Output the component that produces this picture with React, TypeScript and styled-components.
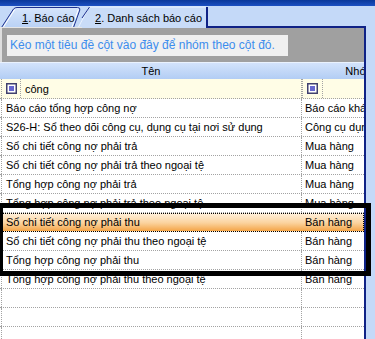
import React from "react";
import styled, { createGlobalStyle } from "styled-components";

const GlobalStyle = createGlobalStyle`
  html, body { margin: 0; padding: 0; background: #c4d9f8; }
  * { box-sizing: border-box; }
`;

const NAVY = "#0f2286";
const DOT = "#a3a3a3";

const Root = styled.div`
  position: relative;
  width: 375px;
  height: 339px;
  overflow: hidden;
  background: #c4d9f8;
  font-family: "Liberation Sans", Arial, sans-serif;
  font-size: 11px;
  color: #000;
`;

const TitleBar = styled.div`
  height: 6px;
  background: linear-gradient(#0a3799, #1c50c2);
`;

const TabStrip = styled.div`
  display: flex;
  width: 366px;
  height: 22px;
`;

const Tab = styled.div<{ $w: number; $pad: number; $front?: boolean; $overlap?: number }>`
  position: relative;
  flex: none;
  width: ${(p) => p.$w}px;
  height: 22px;
  margin-left: ${(p) => -(p.$overlap || 0)}px;
  padding-left: ${(p) => p.$pad}px;
  padding-top: 1px;
  display: flex;
  align-items: center;
  z-index: ${(p) => (p.$front ? 2 : 1)};
  white-space: nowrap;
  font-size: 11px;
`;

const TabShape = styled.svg`
  position: absolute;
  left: 0;
  top: 0;
  z-index: -1;
`;

const TabLabel = styled.span`
  position: relative;
  line-height: 14px;
`;

const Hot = styled.span`
  text-decoration: underline;
`;

const TabFiller = styled.div`
  flex: 1;
  border-bottom: 2px solid ${NAVY};
`;

const Panel = styled.div`
  width: 366px;
  height: 311px;
  border-right: 2px solid ${NAVY};
  background: #fff;
  overflow: hidden;
`;

const GroupPanel = styled.div`
  height: 34px;
  background: #a0a0a0;
  border-left: 2px solid #dedede;
  padding: 7px 0 0 5px;
`;

const GroupHint = styled.div`
  width: 281px;
  height: 21px;
  background: #f0f0f0;
  color: #3c8ded;
  font-size: 12px;
  line-height: 21px;
  padding-left: 3px;
  white-space: nowrap;
`;

const Columns = `
  display: grid;
  grid-template-columns: 302px 116px;
`;

const HeaderRow = styled.div`
  ${Columns}
  height: 17px;
  border-top: 1px solid #eaf2fd;
  background: linear-gradient(#d3e3fb, #b2cdf4);
`;

const HeaderCell = styled.div`
  text-align: center;
  line-height: 16px;
  white-space: nowrap;
`;

const FilterRow = styled.div`
  ${Columns}
  height: 20px;
  background: #fffde6;
  border-bottom: 1px dotted ${DOT};
`;

const FilterCell = styled.div<{ $first?: boolean }>`
  display: flex;
  align-items: center;
  margin-left: ${(p) => (p.$first ? 1 : 0)}px;
  border-left: 1px dotted ${DOT};
  border-right: 1px dotted ${DOT};
`;

const ConditionBox = styled.div<{ $w: number }>`
  width: ${(p) => p.$w}px;
  height: 100%;
  display: flex;
  align-items: center;
  justify-content: center;
  border-right: 1px dotted ${DOT};
`;

const FilterText = styled.span`
  padding-left: 4px;
  line-height: 18px;
`;

const Row = styled.div<{ $selected?: boolean }>`
  ${Columns}
  width: 364px;
  height: 19px;
  border-bottom: 1px dotted ${DOT};
  background: ${(p) =>
    p.$selected ? "linear-gradient(#fef1de, #fbd39e 55%, #f4a548)" : "#fff"};
  outline: ${(p) => (p.$selected ? "1px dotted #000" : "none")};
  outline-offset: -1px;
`;

const Cell = styled.div<{ $first?: boolean; $hide?: boolean }>`
  margin-left: ${(p) => (p.$first ? 1 : 0)}px;
  padding-left: ${(p) => (p.$first ? 4 : 3)}px;
  border-left: ${(p) => (p.$first ? `1px dotted ${p.$hide ? "transparent" : DOT}` : "none")};
  border-right: 1px dotted ${(p) => (p.$hide ? "transparent" : DOT)};
  line-height: 18px;
  white-space: nowrap;
  overflow: hidden;
`;

const Highlight = styled.div`
  position: absolute;
  left: -2px;
  top: 203px;
  width: 373px;
  height: 73px;
  border: 5px solid #000;
  pointer-events: none;
`;

const ConditionIcon = () => (
  <svg width="11" height="11" viewBox="0 0 11 11">
    <rect x="0.75" y="0.75" width="9.5" height="9.5" fill="#fff" stroke="#40406e" strokeWidth="1.5" />
    <rect x="3" y="3" width="5" height="5" fill="#6767cf" />
  </svg>
);

const rows: [string, string][] = [
  ["Báo cáo tổng hợp công nợ", "Báo cáo khác"],
  ["S26-H: Sổ theo dõi công cụ, dụng cụ tại nơi sử dụng", "Công cụ dụng cụ"],
  ["Sổ chi tiết công nợ phải trả", "Mua hàng"],
  ["Sổ chi tiết công nợ phải trả theo ngoại tệ", "Mua hàng"],
  ["Tổng hợp công nợ phải trả", "Mua hàng"],
  ["Tổng hợp công nợ phải trả theo ngoại tệ", "Mua hàng"],
  ["Sổ chi tiết công nợ phải thu", "Bán hàng"],
  ["Sổ chi tiết công nợ phải thu theo ngoại tệ", "Bán hàng"],
  ["Tổng hợp công nợ phải thu", "Bán hàng"],
  ["Tổng hợp công nợ phải thu theo ngoại tệ", "Bán hàng"],
  ["", ""],
  ["", ""],
  ["", ""],
];

export default function App() {
  return (
    <Root>
      <GlobalStyle />
      <TitleBar />
      <TabStrip>
        <Tab $w={82} $pad={22} $front>
          <TabShape width="82" height="22" viewBox="0 0 82 22">
            <defs>
              <linearGradient id="t1" x1="0" y1="0" x2="0" y2="1">
                <stop offset="0" stopColor="#d6e5fb" />
                <stop offset="1" stopColor="#b9d1f5" />
              </linearGradient>
            </defs>
            <path d="M1.5,21.5 L13.5,3 Q15,1.5 17,1.5 L77.5,1.5 Q80.5,1.5 79.8,4 L73.5,21.5 Z" fill="url(#t1)" />
            <path d="M3.5,21 L14.8,3.5" stroke="#ffffff" strokeWidth="1" fill="none" />
            <path d="M72,21 L78.3,3.5" stroke="#ffffff" strokeWidth="1" fill="none" />
            <path d="M1.5,21.5 L13.5,3 Q15,1.5 17,1.5 L77.5,1.5 Q80.5,1.5 79.8,4 L73.5,21.5" stroke="#1c2f8e" strokeWidth="1" fill="none" />
            <line x1="0" y1="21.5" x2="82" y2="21.5" stroke="#e6e6e6" strokeWidth="1" />
          </TabShape>
          <TabLabel>
            <Hot>1</Hot>. Báo cáo
          </TabLabel>
        </Tab>
        <Tab $w={130} $pad={17} $overlap={4}>
          <TabShape width="130" height="22" viewBox="0 0 130 22">
            <path d="M0,22 L11,1 L129,1 L129,22 Z" fill="#c9dcf8" />
            <path d="M0,22 L11,1 L128,1" stroke="#eaf2fe" strokeWidth="1" fill="none" />
            <path d="M4,12 L11.5,1" stroke="#1c2f8e" strokeWidth="1" fill="none" />
            <line x1="129" y1="1" x2="129" y2="22" stroke={NAVY} strokeWidth="2" />
          </TabShape>
          <TabLabel>
            <Hot>2</Hot>. Danh sách báo cáo
          </TabLabel>
        </Tab>
        <TabFiller />
      </TabStrip>
      <Panel>
        <GroupPanel>
          <GroupHint>Kéo một tiêu đề cột vào đây để nhóm theo cột đó.</GroupHint>
        </GroupPanel>
        <HeaderRow>
          <HeaderCell>Tên</HeaderCell>
          <HeaderCell>Nhóm</HeaderCell>
        </HeaderRow>
        <FilterRow>
          <FilterCell $first>
            <ConditionBox $w={19}>
              <ConditionIcon />
            </ConditionBox>
            <FilterText>công</FilterText>
          </FilterCell>
          <FilterCell>
            <ConditionBox $w={20}>
              <ConditionIcon />
            </ConditionBox>
          </FilterCell>
        </FilterRow>
        {rows.map(([name, group], i) => (
          <Row key={i} $selected={i === 6}>
            <Cell $first $hide={i === 6}>{name}</Cell>
            <Cell $hide={i === 6}>{group}</Cell>
          </Row>
        ))}
      </Panel>
      <Highlight />
    </Root>
  );
}
